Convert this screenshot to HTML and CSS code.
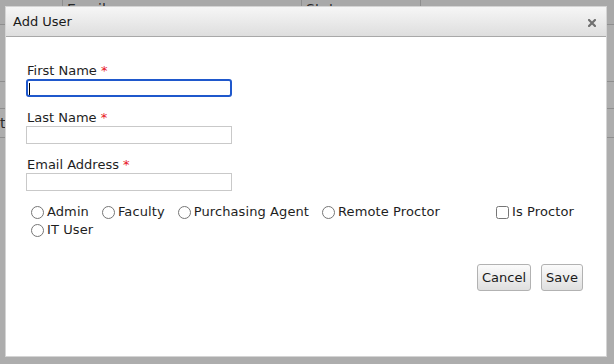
FILE: index.html
```html
<!DOCTYPE html>
<html>
<head>
<meta charset="utf-8">
<link rel="stylesheet" href="styles.css">
</head>
<body>
<div class="page">
  <table class="bg-table">
    <tr class="bg-head"><td class="c1"></td><td class="c2">Email</td><td class="c3">Status</td><td class="c4"></td></tr>
    <tr class="r1"><td></td><td></td><td></td><td></td></tr>
    <tr class="r2"><td></td><td></td><td></td><td></td></tr>
    <tr class="r3"><td>t</td><td></td><td></td><td></td></tr>
  </table>
</div>

<div class="dialog">
  <div class="dialog-header">
    <span class="dialog-title">Add User</span>
    <span class="close">
      <svg width="8" height="8" viewBox="0 0 8 8"><path d="M1 1 L7 7 M7 1 L1 7" stroke="#707070" stroke-width="2.2" stroke-linecap="square"/></svg>
    </span>
  </div>
  <div class="dialog-body">
    <label class="field-label">First Name <span class="req">*</span></label>
    <div class="input-wrap">
      <input type="text" class="text-input focused">
      <span class="caret"></span>
    </div>
    <label class="field-label">Last Name <span class="req">*</span></label>
    <div class="input-wrap"><input type="text" class="text-input"></div>
    <label class="field-label">Email Address <span class="req">*</span></label>
    <div class="input-wrap"><input type="text" class="text-input"></div>

    <div class="roles">
      <div class="radios">
        <label class="opt"><input type="radio" name="role">Admin</label>
        <label class="opt"><input type="radio" name="role">Faculty</label>
        <label class="opt"><input type="radio" name="role">Purchasing Agent</label>
        <label class="opt"><input type="radio" name="role">Remote Proctor</label>
        <label class="opt"><input type="radio" name="role">IT User</label>
      </div>
      <label class="opt check"><input type="checkbox">Is Proctor</label>
    </div>

    <div class="actions">
      <button class="btn">Cancel</button>
      <button class="btn">Save</button>
    </div>
  </div>
</div>
</body>
</html>
```

FILE: styles.css
```css
html, body {
  margin: 0;
  padding: 0;
}
body {
  width: 614px;
  height: 364px;
  overflow: hidden;
  background: #adadad;
  font-family: "DejaVu Sans", Verdana, sans-serif;
  font-size: 13px;
  color: #222;
}
.page {
  width: 614px;
}
.bg-table {
  border-collapse: collapse;
  width: 614px;
  table-layout: fixed;
}
.bg-table td {
  border: 1px solid #8e8e8e;
  border-top: none;
  padding: 0 4px;
  color: #2a2a2a;
  vertical-align: top;
  font-size: 14px;
  line-height: 16px;
}
.bg-table td:first-child { border-left: none; }
.bg-table td:last-child { border-right: none; }
.bg-table .c1 { width: 54px; }
.bg-table .c2 { width: 230px; }
.bg-table .c3 { width: 110px; }
.bg-head td { height: 23px; padding-top: 1px; background: #a9a9a9; }
.r1 td { height: 56px; }
.r2 td { height: 26px; }
.r3 td { height: 28px; line-height: 28px; padding-left: 0; }

.dialog {
  position: absolute;
  left: 5px;
  top: 6px;
  width: 602px;
  height: 351px;
  box-sizing: border-box;
  background: #fff;
  border: 1px solid #d4d4d4;
  display: flex;
  flex-direction: column;
}
.dialog-header {
  height: 29px;
  border-bottom: 1px solid #a8a8a8;
  background: linear-gradient(#f6f6f6, #dedede);
  display: flex;
  align-items: center;
  justify-content: space-between;
  padding: 0 10px 0 7px;
}
.dialog-title {
  color: #1a1a1a;
  line-height: 16px;
}
.close {
  display: flex;
  width: 8px;
  height: 8px;
  margin-top: 2px;
}
.dialog-body {
  padding: 25px 23px 0 20px;
  display: flex;
  flex-direction: column;
}
.field-label {
  display: block;
  line-height: 17px;
  color: #1e1e1e;
  padding-left: 1px;
}
.req {
  color: #e8141e;
}
.input-wrap {
  position: relative;
  width: 206px;
  height: 18px;
  margin-bottom: 12px;
}
.text-input {
  box-sizing: border-box;
  width: 206px;
  height: 18px;
  margin: 0;
  border: 1px solid #c9c9c9;
  border-radius: 0;
  padding: 0 2px;
  font: inherit;
  outline: none;
  background: #fff;
}
.text-input.focused {
  border: 2px solid #1f58cc;
  border-radius: 3px;
}
.caret {
  position: absolute;
  left: 3px;
  top: 4px;
  width: 1px;
  height: 12px;
  background: #000;
}
.roles {
  display: flex;
  align-items: flex-start;
  margin-top: 0;
}
.radios {
  width: 466px;
  display: flex;
  flex-wrap: wrap;
  column-gap: 8px;
}
.opt {
  display: flex;
  align-items: center;
  line-height: 18px;
  height: 18px;
  color: #1e1e1e;
  white-space: nowrap;
  letter-spacing: 0.1px;
}
.opt input[type="radio"] {
  width: 13px;
  height: 13px;
  margin: 0 3px 0 5px;
}
.opt input[type="checkbox"] {
  width: 13px;
  height: 13px;
  margin: 0 3px 0 4px;
}
.actions {
  display: flex;
  justify-content: flex-end;
  gap: 10px;
  margin-top: 25px;
}
.btn {
  height: 27px;
  padding: 0 4px;
  border: 1px solid #b2b2b2;
  border-radius: 3px;
  background: linear-gradient(#fbfbfb, #dfdfdf);
  font: inherit;
  color: #1a1a1a;
  margin: 0;
}
```
